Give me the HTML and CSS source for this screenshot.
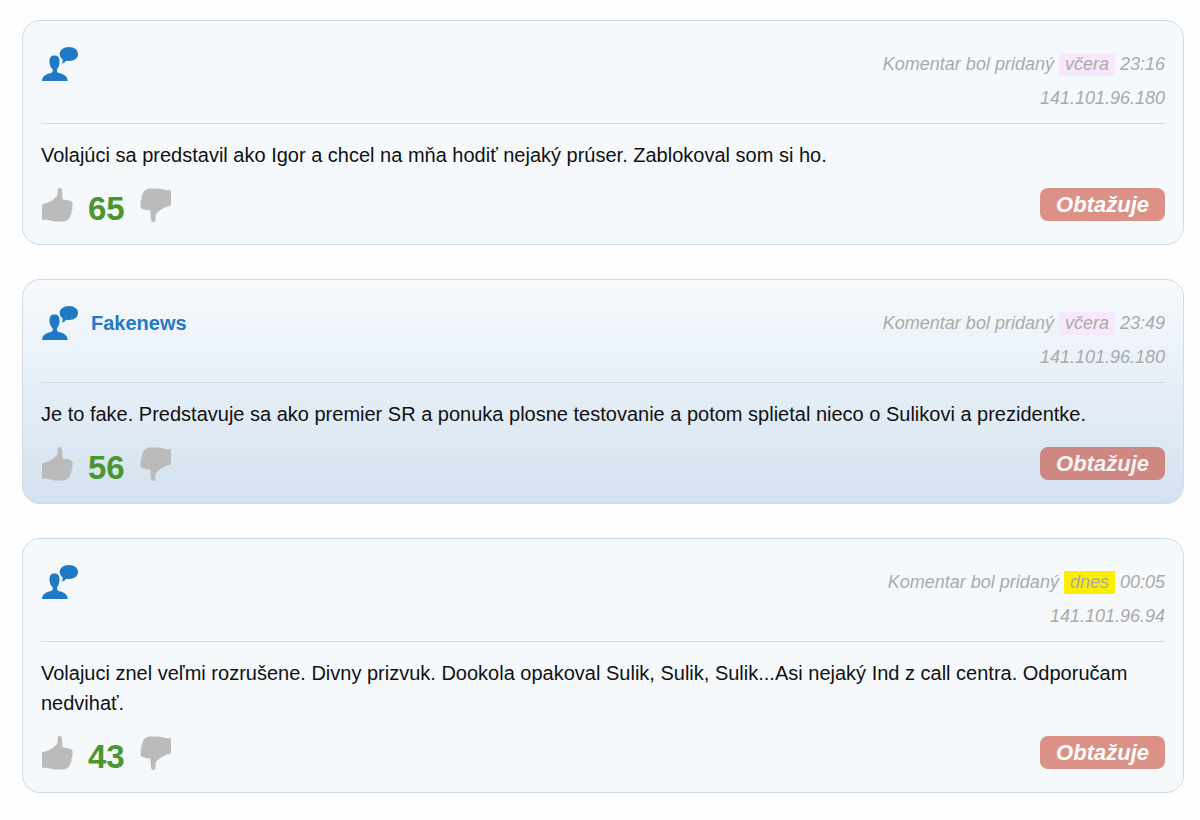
FILE: index.html
```html
<!DOCTYPE html>
<html lang="sk">
<head>
    <meta charset="UTF-8">
    <meta name="viewport" content="width=device-width, initial-scale=1.0">
    <title>Komentáre</title>
    <link rel="stylesheet" href="styles.css">
</head>
<body>

<!-- shared icons -->
<svg class="sprite" aria-hidden="true">
  <symbol id="user" viewBox="-1 0 37 34">
    <path d="M0 34C0 31 1.500 28.500 5 27.200C8 26.200 10.500 26 10.700 24V22.300C8.500 20.500 7.300 17.500 7.500 14C7.500 10.500 9 8.500 12.500 8.500C16 8.500 17.500 10.500 17.500 14C17.700 17.500 16.700 20.500 15 22.300V24C15.200 26 17.700 26.200 20.700 27.200C24.200 28.500 25.700 31 25.700 34Z"/>
    <path d="M27 0C32.500 0 36 3 36 7C36 11 32.500 14 27 14C26 14 25 13.900 24.200 13.700C23 15.200 21.500 16.200 19.700 16.700C20.500 15.500 20.800 14 20.700 12.400C18.800 11.200 17.700 9.300 17.700 7C17.700 3 21.500 0 27 0Z"/>
  </symbol>
  <symbol id="thumb" viewBox="0 0 31 34">
    <path d="M0 16.500C4 15.500 8 14 11 11.800C13.500 9.500 15.500 8 15.500 6.500V2.500C15.500 0.800 16.300 0 17.500 0C19.300 0 20 1.500 20.200 4L20.500 11.300C23 12 27 12 29.500 13.500C31 15 31 16.500 30 18C31 20 30.500 21.500 29.300 22.700C30 24.500 29.500 26 28.300 27C28.500 30 25.500 33 21.500 33.500H14C10 33.500 7 31.500 0 31.800Z"/>
  </symbol>
</svg>

<div class="comments">

  <!-- comment 1 -->
  <div class="comment">
    <div class="head">
      <div class="author"><svg class="user"><use href="#user"/></svg></div>
      <div class="info">Komentar bol pridaný <span class="day yesterday">včera</span> 23:16<br>141.101.96.180</div>
    </div>
    <p class="text">Volajúci sa predstavil ako Igor a chcel na mňa hodiť nejaký prúser. Zablokoval som si ho.</p>
    <div class="foot">
      <button class="vote" aria-label="Súhlasím"><svg class="thumb"><use href="#thumb"/></svg></button>
      <span class="score">65</span>
      <button class="vote" aria-label="Nesúhlasím"><svg class="thumb down"><use href="#thumb"/></svg></button>
      <button class="rating">Obtažuje</button>
    </div>
  </div>

  <!-- comment 2 -->
  <div class="comment blue">
    <div class="head">
      <div class="author"><svg class="user"><use href="#user"/></svg><span class="name">Fakenews</span></div>
      <div class="info">Komentar bol pridaný <span class="day yesterday">včera</span> 23:49<br>141.101.96.180</div>
    </div>
    <p class="text">Je to fake. Predstavuje sa ako premier SR a ponuka plosne testovanie a potom splietal nieco o Sulikovi a prezidentke.</p>
    <div class="foot">
      <button class="vote" aria-label="Súhlasím"><svg class="thumb"><use href="#thumb"/></svg></button>
      <span class="score">56</span>
      <button class="vote" aria-label="Nesúhlasím"><svg class="thumb down"><use href="#thumb"/></svg></button>
      <button class="rating">Obtažuje</button>
    </div>
  </div>

  <!-- comment 3 -->
  <div class="comment">
    <div class="head">
      <div class="author"><svg class="user"><use href="#user"/></svg></div>
      <div class="info">Komentar bol pridaný <span class="day today">dnes</span> 00:05<br>141.101.96.94</div>
    </div>
    <p class="text">Volajuci znel veľmi rozrušene. Divny prizvuk. Dookola opakoval Sulik, Sulik, Sulik...Asi nejaký Ind z call centra. Odporučam nedvihať.</p>
    <div class="foot">
      <button class="vote" aria-label="Súhlasím"><svg class="thumb"><use href="#thumb"/></svg></button>
      <span class="score">43</span>
      <button class="vote" aria-label="Nesúhlasím"><svg class="thumb down"><use href="#thumb"/></svg></button>
      <button class="rating">Obtažuje</button>
    </div>
  </div>

</div>

</body>
</html>
```
FILE: styles.css
```css
body{
  margin: 0;
  background-color: #fefefe;
  font-family: "Liberation Sans", Arial, sans-serif;
  font-size: 20px;
  color: #111;
}

.sprite{
  display: none;
}

.comments{
  display: flex;
  flex-direction: column;
  gap: 34px;
  padding: 20px 16px 20px 22px;
}

.comment{
  border: 1px solid #cbdcea;
  border-radius: 18px;
  background-color: #f5f9fc;
  padding: 26px 18px 23px;
}
.blue{
  background: linear-gradient(#f7fafd, #d3e2f0);
}

/* top part with icon, name and date */
.head{
  display: flex;
  justify-content: space-between;
  padding-bottom: 8px;
  border-bottom: 1px solid #d0dbe2;
}
.blue .head{
  border-color: #d6d9dd;
}
.author{
  display: flex;
  align-items: center;
  gap: 13px;
  height: 34px;
}
.user{
  width: 37px;
  height: 34px;
  fill: #1f7ac6;
}
.name{
  font-weight: bold;
  color: #2779c4;
}
.info{
  font-size: 18px;
  font-style: italic;
  line-height: 34px;
  text-align: right;
  color: #aaa;
}
.day{
  display: inline-block;
  line-height: 23px;
  padding: 0 6px;
}
.yesterday{
  background-color: #f8e8fb;
}
.today{
  background-color: #fbee00;
}

.text{
  margin: 16px 0 18px;
  line-height: 30px;
}

/* votes */
.foot{
  display: flex;
  align-items: center;
  height: 33px;
}
.vote{
  border: none;
  background: none;
  padding: 0;
  cursor: pointer;
}
.thumb{
  display: block;
  width: 31px;
  height: 34px;
  margin: 0 1px;
  fill: #bbb;
}
.down{
  transform: rotate(180deg);
}
.score{
  padding: 8px 14px 0;
  font-size: 33px;
  font-weight: bold;
  color: #4d962f;
}
.rating{
  margin-left: auto;
  border: none;
  border-radius: 8px;
  padding: 0 16px;
  height: 33px;
  background-color: #dc9187;
  color: white;
  font-family: inherit;
  font-size: 22px;
  font-weight: bold;
  font-style: italic;
  cursor: pointer;
}
.blue .rating{
  background-color: #cf8781;
  color: #f5f3f6;
}
```
